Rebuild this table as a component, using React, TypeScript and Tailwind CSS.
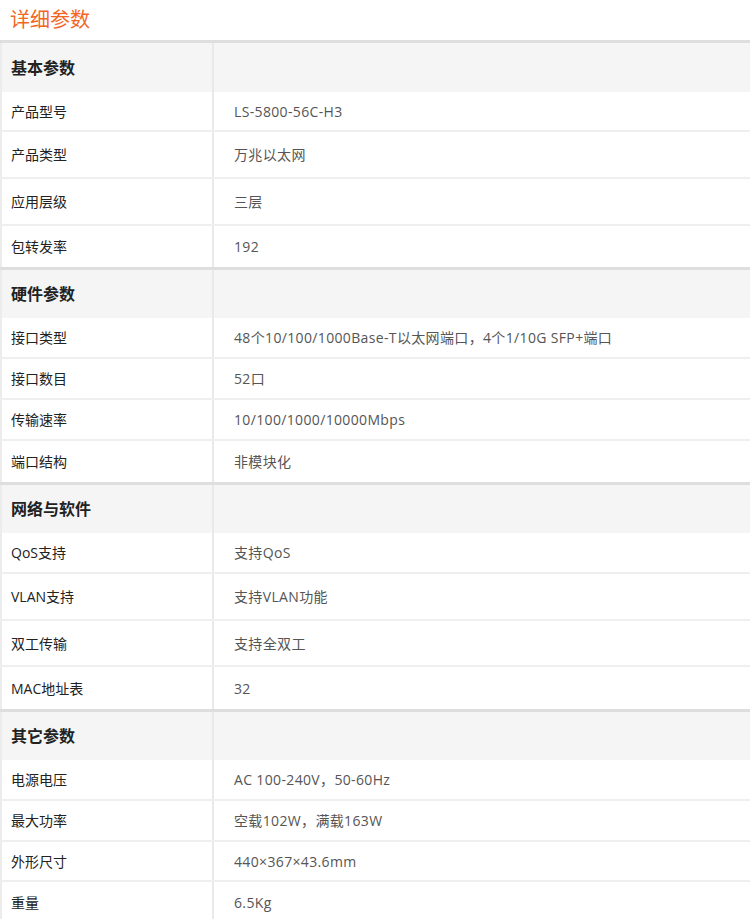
import React from "react";

type Row = { label: string; value: string; h: number };
type Section = { title: string; h: number; rows: Row[] };

const sections: Section[] = [
  {
    title: "基本参数",
    h: 49,
    rows: [
      { label: "产品型号", value: "LS-5800-56C-H3", h: 40 },
      { label: "产品类型", value: "万兆以太网", h: 47 },
      { label: "应用层级", value: "三层", h: 47 },
      { label: "包转发率", value: "192", h: 41 },
    ],
  },
  {
    title: "硬件参数",
    h: 48,
    rows: [
      { label: "接口类型", value: "48个10/100/1000Base-T以太网端口，4个1/10G SFP+端口", h: 41 },
      { label: "接口数目", value: "52口", h: 41 },
      { label: "传输速率", value: "10/100/1000/10000Mbps", h: 41 },
      { label: "端口结构", value: "非模块化", h: 41 },
    ],
  },
  {
    title: "网络与软件",
    h: 48,
    rows: [
      { label: "QoS支持", value: "支持QoS", h: 41 },
      { label: "VLAN支持", value: "支持VLAN功能", h: 47 },
      { label: "双工传输", value: "支持全双工", h: 46 },
      { label: "MAC地址表", value: "32", h: 42 },
    ],
  },
  {
    title: "其它参数",
    h: 48,
    rows: [
      { label: "电源电压", value: "AC 100-240V，50-60Hz", h: 41 },
      { label: "最大功率", value: "空载102W，满载163W", h: 41 },
      { label: "外形尺寸", value: "440×367×43.6mm", h: 40 },
      { label: "重量", value: "6.5Kg", h: 40 },
    ],
  },
];

export default function App() {
  return (
    <div className="w-[750px] bg-white font-['Open_Sans','Noto_Sans_CJK_SC',sans-serif]">
      <div className="h-[40px] pl-[10px] pt-[6px] text-[20px] leading-[28px] text-[#f3661f]">
        详细参数
      </div>
      {sections.map((s) => (
        <div key={s.title} className="border-t-[3px] border-[#dedede]">
          <div className="flex bg-[#f5f5f5] border-l-2 border-[#ececec]" style={{ height: s.h }}>
            <div className="w-[212px] border-r-2 border-[#e9e9e9] flex items-center pl-[9px] text-[16px] font-bold text-[#222]">
              {s.title}
            </div>
            <div className="flex-1" />
          </div>
          {s.rows.map((r, i) => (
            <div
              key={r.label}
              className={
                "flex border-l-2 border-[#ececec] " +
                (i < s.rows.length - 1 ? "border-b-2 border-b-[#efefef]" : "")
              }
              style={{ height: r.h }}
            >
              <div className="w-[212px] border-r-2 border-[#e9e9e9] flex items-center pl-[9px] text-[14px] text-[#222]">
                {r.label}
              </div>
              <div className="flex-1 flex items-center pl-[20px] text-[14px] tracking-[0.35px] text-[#555]">
                {r.value}
              </div>
            </div>
          ))}
        </div>
      ))}
    </div>
  );
}
